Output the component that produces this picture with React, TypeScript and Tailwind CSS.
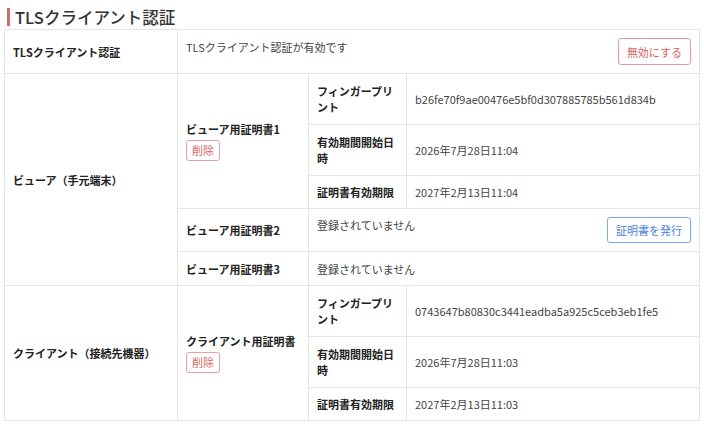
import React from "react";

const FONT = "font-['Noto_Sans_CJK_JP','Noto_Sans',sans-serif]";

const th = "border border-[#e6e6e6] px-2 py-2 text-left align-middle font-bold text-[#222] leading-[16px]";
const td = "border border-[#e6e6e6] px-2 py-2 align-middle text-[#444] leading-[16px]";

function DeleteButton() {
  return (
    <button className="mt-[3px] block rounded-[3px] border border-[#e3a0a0] px-[5px] h-[21px] text-[11px] font-normal leading-[19px] text-[#d9645f] bg-white">
      削除
    </button>
  );
}

export default function App() {
  return (
    <div className={`${FONT} bg-white w-[704px] h-[424px] overflow-hidden text-[11px]`}>
      <div className="flex items-start pl-[7px] pt-[7px] h-[29px]">
        <div className="w-[3px] h-[18px] mt-[1px] bg-[#d46a6a] mr-[5px]" />
        <h2 className="text-[16.5px] leading-[20px] font-medium text-[#333]">TLSクライアント認証</h2>
      </div>
      <table className="ml-[4px] w-[696px] table-fixed border-collapse">
        <colgroup>
          <col className="w-[173px]" />
          <col className="w-[131px]" />
          <col className="w-[98px]" />
          <col />
        </colgroup>
        <tbody>
          <tr className="h-[44px]">
            <th className={th}>TLSクライアント認証</th>
            <td className={td} colSpan={3}>
              <div className="flex items-start justify-between">
                <span className="pt-[1px] leading-[17px]">TLSクライアント認証が有効です</span>
                <button className="h-[27px] rounded-[3px] border border-[#e39a9a] px-[8px] text-[11px] text-[#d9645f] bg-white">
                  無効にする
                </button>
              </div>
            </td>
          </tr>
          <tr className="h-[51px]">
            <th className={th} rowSpan={5}>ビューア（手元端末）</th>
            <th className={th} rowSpan={3}>
              <div>ビューア用証明書1</div>
              <DeleteButton />
            </th>
            <th className={th}>フィンガープリント</th>
            <td className={td}>b26fe70f9ae00476e5bf0d307885785b561d834b</td>
          </tr>
          <tr className="h-[51px]">
            <th className={th}>有効期間開始日時</th>
            <td className={td}>2026年7月28日11:04</td>
          </tr>
          <tr className="h-[33px]">
            <th className={th}>証明書有効期限</th>
            <td className={td}>2027年2月13日11:04</td>
          </tr>
          <tr className="h-[43px]">
            <th className={th}>ビューア用証明書2</th>
            <td className={td} colSpan={2}>
              <div className="flex items-start justify-between">
                <span className="leading-[17px]">登録されていません</span>
                <button className="h-[26px] rounded-[3px] border border-[#7aa9ee] px-[8px] text-[11px] text-[#4a82dc] bg-white">
                  証明書を発行
                </button>
              </div>
            </td>
          </tr>
          <tr className="h-[34px]">
            <th className={th}>ビューア用証明書3</th>
            <td className={td} colSpan={2}>登録されていません</td>
          </tr>
          <tr className="h-[51px]">
            <th className={th} rowSpan={3}>クライアント（接続先機器）</th>
            <th className={th} rowSpan={3}>
              <div>クライアント用証明書</div>
              <DeleteButton />
            </th>
            <th className={th}>フィンガープリント</th>
            <td className={td}>0743647b80830c3441eadba5a925c5ceb3eb1fe5</td>
          </tr>
          <tr className="h-[51px]">
            <th className={th}>有効期間開始日時</th>
            <td className={td}>2026年7月28日11:03</td>
          </tr>
          <tr className="h-[33px]">
            <th className={th}>証明書有効期限</th>
            <td className={td}>2027年2月13日11:03</td>
          </tr>
        </tbody>
      </table>
    </div>
  );
}
